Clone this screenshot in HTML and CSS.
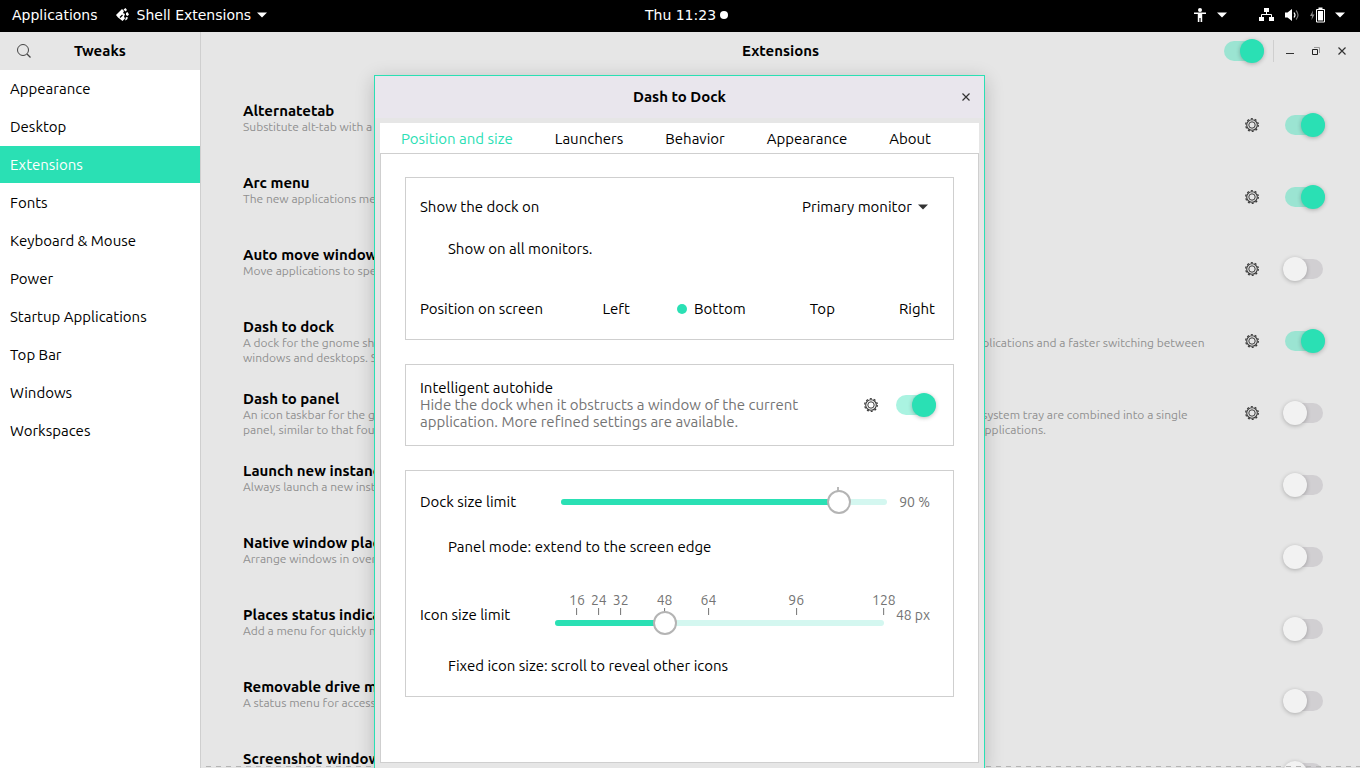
FILE: index.html
```html
<!DOCTYPE html>
<html lang="en">
<head>
<meta charset="utf-8">
<title>Tweaks - Extensions</title>
<link rel="stylesheet" href="styles.css">
</head>
<body>
<svg class="defs" aria-hidden="true">
  <symbol id="gear" viewBox="0 0 14 14">
    <circle cx="7" cy="7" r="6.3" fill="none" stroke="#3c3c3c" stroke-width="1.3" stroke-dasharray="2 1.96"/>
    <circle cx="7" cy="7" r="5.3" fill="none" stroke="#3c3c3c" stroke-width="1.1"/>
    <circle cx="7" cy="7" r="3.2" fill="none" stroke="#3c3c3c" stroke-width="1"/>
  </symbol>
  <symbol id="caret" viewBox="0 0 10 6"><path d="M0 .5h10L5 5.500z" fill="currentColor"/></symbol>
  <symbol id="cross" viewBox="0 0 8 8"><path d="M.5.5l7 7M7.500.5l-7 7" stroke="#333" stroke-width="1.200" fill="none"/></symbol>
</svg>

<header class="topbar">
  <div class="topbar-left">
    <button class="bar-button">Applications</button>
    <button class="bar-button app-menu">
      <svg width="13" height="14" viewBox="0 0 13 14"><path d="M6 1L8 3 7 5 9 6 8 8.500 9 10.500 6.500 13 4 11 2 9.500 0 7 2 5 3.500 3.500z" fill="#fff"/><path d="M7.500 1.500l2-1.500 1.500 2-1.500 1.500z M10 5l1.500-1L13 6.500 11.500 8 10 7z M10 9l2 .5-1 2-2 1z" fill="#fff"/><path d="M4 9.500L6.500 7" stroke="#000" stroke-width="1.200" fill="none"/></svg>
      <span>Shell Extensions</span>
      <svg class="caret" width="10" height="6"><use href="#caret"/></svg>
    </button>
  </div>
  <button class="bar-button clock">Thu 11:23<span class="dot"></span></button>
  <div class="topbar-right">
    <button class="bar-button access" aria-label="Accessibility">
      <svg width="12" height="14" viewBox="0 0 12 14" fill="#fff"><circle cx="6" cy="2" r="2"/><path d="M0 4.500h12v1.500H8.200V14H6.600V10H5.400v4H3.800V6H0z"/></svg>
      <svg class="caret" width="10" height="6"><use href="#caret"/></svg>
    </button>
    <button class="bar-button system" aria-label="System menu">
      <svg width="15" height="14" viewBox="0 0 15 14"><path d="M5 0h5v4H5zM0 9h5v4H0zM10 9h5v4h-5z" fill="#fff"/><path d="M7.500 4v3M2.500 9V6.500h10V9" stroke="#fff" fill="none"/></svg>
      <svg width="14" height="14" viewBox="0 0 14 14"><path d="M0 4.500h2.500L7 1v12L2.500 9.500H0z" fill="#fff"/><path d="M9 4.500q2 2.500 0 5" stroke="#fff" stroke-width="1.200" fill="none"/><path d="M11 2.500q4 4.500 0 9" stroke="#777" stroke-width="1.200" fill="none"/></svg>
      <svg width="15" height="16" viewBox="0 0 15 16"><path d="M3 3.500L0 9h2l-.5 4L4.500 7.500h-2z" fill="#888"/><path d="M6.500 2.500h8v12.500h-8z" fill="none" stroke="#fff"/><path d="M8.500.5h4v1.500h-4zM8 4h5v9.500H8z" fill="#fff"/></svg>
      <svg class="caret" width="10" height="6"><use href="#caret"/></svg>
    </button>
  </div>
</header>

<div class="window">
  <aside class="sidebar">
    <div class="side-header">
      <button class="icon-button" aria-label="Search"><svg width="14" height="14" viewBox="0 0 14 14"><circle cx="6" cy="6" r="5.500" fill="none" stroke="#444"/><path d="M10 10l3.500 3.500" stroke="#444" stroke-width="1.300"/></svg></button>
      <h1 class="title">Tweaks</h1>
    </div>
    <nav class="side-nav">
      <a href="#">Appearance</a>
      <a href="#">Desktop</a>
      <a href="#" class="selected" aria-current="page">Extensions</a>
      <a href="#">Fonts</a>
      <a href="#">Keyboard &amp; Mouse</a>
      <a href="#">Power</a>
      <a href="#">Startup Applications</a>
      <a href="#">Top Bar</a>
      <a href="#">Windows</a>
      <a href="#">Workspaces</a>
    </nav>
  </aside>

  <main class="content">
    <div class="content-header">
      <span></span>
      <h2 class="title">Extensions</h2>
      <div class="controls">
        <input type="checkbox" class="switch" checked aria-label="Enable extensions">
        <span class="divider"></span>
        <button class="win-button" aria-label="Minimize"><svg width="8" height="8"><path d="M0 6.500h8" stroke="#333" stroke-width="1"/></svg></button>
        <button class="win-button" aria-label="Restore"><svg width="8" height="8" viewBox="0 0 8 8"><path d="M2 .5h5.500V6" stroke="#999" fill="none"/><path d="M.5 2.500h5v5h-5z" stroke="#222" fill="none"/></svg></button>
        <button class="win-button" aria-label="Close"><svg width="8" height="8"><use href="#cross"/></svg></button>
      </div>
    </div>

    <div class="ext-list">
      <div class="ext"><label class="ext-text" for="e1"><b>Alternatetab</b><span>Substitute alt-tab with a window based switcher that does not group by application.</span></label><button class="icon-button" aria-label="Settings"><svg width="14" height="14"><use href="#gear"/></svg></button><input type="checkbox" class="switch" id="e1" checked></div>
      <div class="ext"><label class="ext-text" for="e2"><b>Arc menu</b><span>The new applications menu for Gnome 3.</span></label><button class="icon-button" aria-label="Settings"><svg width="14" height="14"><use href="#gear"/></svg></button><input type="checkbox" class="switch" id="e2" checked></div>
      <div class="ext"><label class="ext-text" for="e3"><b>Auto move windows</b><span>Move applications to specific workspaces when they create windows.</span></label><button class="icon-button" aria-label="Settings"><svg width="14" height="14"><use href="#gear"/></svg></button><input type="checkbox" class="switch" id="e3"></div>
      <div class="ext"><label class="ext-text" for="e4"><b>Dash to dock</b><span>A dock for the gnome shell. This extension moves the dash out of the overview transforming it in a dock for an even easier launching of applications and a faster switching between windows and desktops. Side and bottom placement options are available.</span></label><button class="icon-button" aria-label="Settings"><svg width="14" height="14"><use href="#gear"/></svg></button><input type="checkbox" class="switch" id="e4" checked></div>
      <div class="ext"><label class="ext-text" for="e5"><b>Dash to panel</b><span>An icon taskbar for the gnome shell. This extension moves the dash into the gnome main panel so that both the application launchers and system tray are combined into a single panel, similar to that found in KDE Plasma and Windows 7+. A separate dock is no longer needed for easy access to running and favorited applications.</span></label><button class="icon-button" aria-label="Settings"><svg width="14" height="14"><use href="#gear"/></svg></button><input type="checkbox" class="switch" id="e5"></div>
      <div class="ext"><label class="ext-text" for="e6"><b>Launch new instance</b><span>Always launch a new instance when clicking in the dash or the application view.</span></label><input type="checkbox" class="switch" id="e6"></div>
      <div class="ext"><label class="ext-text" for="e7"><b>Native window placement</b><span>Arrange windows in overview in a more compact way.</span></label><input type="checkbox" class="switch" id="e7"></div>
      <div class="ext"><label class="ext-text" for="e8"><b>Places status indicator</b><span>Add a menu for quickly navigating places in the system.</span></label><input type="checkbox" class="switch" id="e8"></div>
      <div class="ext"><label class="ext-text" for="e9"><b>Removable drive menu</b><span>A status menu for accessing and unmounting removable devices.</span></label><input type="checkbox" class="switch" id="e9"></div>
      <div class="ext"><label class="ext-text" for="e10"><b>Screenshot window sizer</b><span>Resize windows for screenshots.</span></label><input type="checkbox" class="switch" id="e10"></div>
    </div>
    <div class="undershoot"></div>
  </main>
</div>

<section class="dialog" role="dialog" aria-labelledby="dialog-title">
  <div class="dialog-header">
    <span></span>
    <h2 class="title" id="dialog-title">Dash to Dock</h2>
    <button class="win-button" aria-label="Close"><svg width="8" height="8"><use href="#cross"/></svg></button>
  </div>
  <div class="notebook">
    <div class="tabs" role="tablist">
      <button role="tab" class="tab active" aria-selected="true">Position and size</button>
      <button role="tab" class="tab">Launchers</button>
      <button role="tab" class="tab">Behavior</button>
      <button role="tab" class="tab">Appearance</button>
      <button role="tab" class="tab">About</button>
    </div>
    <div class="page">
      <div class="frame placement">
        <div class="row monitor">
          <label for="monitor">Show the dock on</label>
          <div class="combo"><select id="monitor"><option>Primary monitor</option></select><svg class="caret" width="10" height="6"><use href="#caret"/></svg></div>
        </div>
        <label class="check"><input type="checkbox"><span>Show on all monitors.</span></label>
        <div class="row position" role="radiogroup" aria-label="Position on screen">
          <span>Position on screen</span>
          <div class="radios">
            <label><input type="radio" name="pos"><span>Left</span></label>
            <label><input type="radio" name="pos" checked><span>Bottom</span></label>
            <label><input type="radio" name="pos"><span>Top</span></label>
            <label><input type="radio" name="pos"><span>Right</span></label>
          </div>
        </div>
      </div>

      <div class="frame autohide">
        <label class="autohide-text" for="autohide">Intelligent autohide<span class="dim">Hide the dock when it obstructs a window of the current application. More refined settings are available.</span></label>
        <button class="icon-button" aria-label="Autohide settings"><svg width="14" height="14"><use href="#gear"/></svg></button>
        <input type="checkbox" class="switch" id="autohide" checked>
      </div>

      <div class="frame sizes">
        <div class="row dock-size">
          <label for="dock">Dock size limit</label>
          <div class="scale">
            <div class="marks"><span class="mark" style="left:85%"></span></div>
            <div class="trough"><div class="fill" style="width:85%"></div><input type="range" id="dock" min="33" max="100" value="90"></div>
          </div>
          <output class="dim" for="dock">90 %</output>
        </div>
        <label class="check"><input type="checkbox"><span>Panel mode: extend to the screen edge</span></label>
        <div class="row icon-size">
          <label for="icon">Icon size limit</label>
          <div class="scale">
            <div class="marks dim">
              <span class="mark" style="left:6.67%">16</span><span class="mark" style="left:13.33%">24</span><span class="mark" style="left:20%">32</span><span class="mark" style="left:33.33%">48</span><span class="mark" style="left:46.67%">64</span><span class="mark" style="left:73.33%">96</span><span class="mark" style="left:100%">128</span>
            </div>
            <div class="trough"><div class="fill" style="width:33.33%"></div><input type="range" id="icon" min="8" max="128" value="48"></div>
          </div>
          <output class="dim" for="icon">48 px</output>
        </div>
        <label class="check"><input type="checkbox"><span>Fixed icon size: scroll to reveal other icons</span></label>
      </div>
    </div>
  </div>
</section>
</body>
</html>
```
FILE: styles.css
```css
* { box-sizing: border-box; }

:root {
  --accent: #2ae0b4;
  --line: #cfcfcf;
  --bg: #e6e6e6;
}

body {
  margin: 0;
  height: 100vh;
  display: flex;
  flex-direction: column;
  overflow: hidden;
  position: relative;
  font: 15px/17px Ubuntu, "Noto Sans", sans-serif;
  color: #000;
  background: var(--bg);
}

button, select, input { margin: 0; font: inherit; color: inherit; }
button { border: 0; padding: 0; background: none; }
svg { display: block; flex: none; }
.defs { position: absolute; width: 0; height: 0; }
.title { margin: 0; font-size: 15px; line-height: 18px; font-weight: 700; text-align: center; white-space: nowrap; }
.dim { color: #747474; }

/* Top bar */
.topbar {
  flex: none;
  height: 32px;
  padding: 0 15px 2px 12px;
  display: grid;
  grid-template-columns: 1fr auto 1fr;
  align-items: center;
  background: #000;
  color: #fff;
  font-family: "DejaVu Sans", sans-serif;
  font-size: 14px;
}
.topbar-left, .topbar-right, .bar-button { display: flex; align-items: center; }
.topbar-left { gap: 18px; }
.topbar-right { justify-content: flex-end; gap: 32px; }
.app-menu { gap: 8px; }
.app-menu .caret { margin-left: -2px; }
.clock { gap: 4px; padding-left: 16px; }
.dot { width: 8px; height: 8px; border-radius: 50%; background: #fff; }
.access { gap: 11px; }
.system { gap: 11px; }
.system .caret { margin-left: -1px; }

/* Main window */
.window { flex: 1; min-height: 0; display: flex; }
.sidebar { flex: 0 0 201px; border-right: 1px solid var(--line); background: #fff; }
.side-header {
  height: 38px;
  display: grid;
  grid-template-columns: 47px 1fr 47px;
  align-items: center;
  background: var(--bg);
}
.side-header .icon-button { justify-self: center; }
.side-nav { display: flex; flex-direction: column; gap: 1px; }
.side-nav a { height: 37px; padding: 0 10px; line-height: 38px; color: #000; text-decoration: none; }
.side-nav .selected { background: var(--accent); color: #fff; }

.content { flex: 1; min-width: 0; display: flex; flex-direction: column; position: relative; overflow: hidden; }
.content-header {
  flex: none;
  height: 38px;
  display: grid;
  grid-template-columns: 1fr auto 1fr;
  align-items: center;
}
.controls { display: flex; align-items: center; justify-content: flex-end; padding-right: 5px; }
.divider { width: 1px; height: 22px; margin: 0 3px 0 9px; background: var(--line); }
.win-button { width: 26px; height: 26px; display: grid; place-items: center; }

.ext-list { padding-top: 19px; }
.ext { height: 72px; padding: 0 35px 0 42px; display: flex; align-items: center; gap: 24px; }
.ext-text { flex: 1; align-self: flex-start; padding: 13px 8px 0 0; }
.ext-text b { display: block; }
.ext-text span { display: block; font-size: 12px; line-height: 15px; color: #909090; }
.undershoot {
  position: absolute;
  left: 0;
  right: 0;
  bottom: 1px;
  height: 1px;
  background: repeating-linear-gradient(90deg, transparent 0 5px, #b4b4b4 5px 10px);
}

/* Switch */
.switch { appearance: none; position: relative; flex: none; width: 42px; height: 24px; }
.switch::before, .switch::after { content: ""; position: absolute; left: 0; }
.switch::before { top: 2px; width: 40px; height: 20px; border-radius: 10px; background: #d1cfd2; }
.switch::after { top: 0; width: 24px; height: 24px; border-radius: 50%; background: #f2f2f2; box-shadow: 0 1px 4px rgba(0, 0, 0, .25); }
.switch:checked::before { left: 2px; background: rgba(42, 224, 180, .4); }
.switch:checked::after { left: 18px; background: var(--accent); }

/* Preferences dialog */
.dialog {
  position: absolute;
  top: 75px;
  bottom: 0;
  left: calc(50% - 306px);
  width: 611px;
  display: flex;
  flex-direction: column;
  border: 1px solid var(--accent);
  border-bottom: 0;
  background: var(--bg);
  box-shadow: 0 4px 18px rgba(0, 0, 0, .2);
}
.dialog-header {
  flex: none;
  height: 42px;
  display: grid;
  grid-template-columns: 1fr auto 1fr;
  align-items: center;
  background: #e9e6ed;
}
.dialog-header .win-button { justify-self: end; margin-right: 5px; }
.notebook { flex: 1; min-height: 0; display: flex; flex-direction: column; margin: 5px; }
.tabs { flex: none; height: 30px; display: flex; background: #fff; }
.tab { padding: 0 21px; white-space: nowrap; }
.tab.active { color: var(--accent); }
.page { flex: 1; padding: 23px 24px; display: flex; flex-direction: column; gap: 24px; border: 1px solid var(--line); background: #fff; }
.frame { border: 1px solid var(--line); }
.row { display: flex; align-items: center; justify-content: space-between; }
.row > label, .row > span, .check > span, .radios span, .combo select { padding: 0 0 2px; }

.placement { padding: 12px 18px 18px 14px; }
.monitor { height: 34px; }
.combo { display: flex; align-items: center; gap: 6px; padding-right: 7px; color: #333; }
.combo select { appearance: none; border: 0; background: none; color: #000; }
.check { display: flex; align-items: center; gap: 12px; height: 24px; }
.check input { appearance: none; width: 16px; height: 16px; }
.monitor + .check { margin: 13px 0 36px; }
.position { height: 24px; }
.radios { display: flex; gap: 47px; }
.radios label { display: flex; align-items: center; gap: 7px; }
.radios input { appearance: none; width: 10px; height: 10px; border-radius: 50%; }
.radios input:checked { background: var(--accent); }

.autohide { display: flex; align-items: center; gap: 16px; padding: 13px 17px 14px 14px; }
.autohide-text { flex: 1; padding: 1px 0; }
.autohide-text .dim { display: block; }

.sizes { padding: 16px 23px 18px 14px; }
.sizes .row { gap: 12px; }
.sizes output, .marks { font-size: 14px; }
.dock-size { height: 30px; }
.dock-size label { flex: 0 0 129px; }
.icon-size label { flex: 0 0 123px; }
.dock-size + .check { margin: 18px 0 33px; }
.icon-size { height: 46px; margin-bottom: 16px; }
.scale { flex: 1; height: 100%; }
.marks { position: relative; height: 12px; line-height: 16px; }
.icon-size .marks { height: 28px; }
.mark { position: absolute; top: 0; transform: translateX(-50%); }
.mark::after { content: ""; display: block; width: 1px; height: 7px; margin: 0 auto; background: #747474; }
.trough { position: relative; height: 6px; border-radius: 3px; background: #d4f7f0; }
.fill { height: 6px; border-radius: 3px; background: var(--accent); }
.trough input { appearance: none; position: absolute; left: -12px; top: -9px; width: calc(100% + 24px); height: 24px; background: none; }
.trough input::-webkit-slider-thumb { appearance: none; width: 24px; height: 24px; border: 2px solid #b4b4b4; border-radius: 50%; background: #fff; }
.trough input::-moz-range-thumb { width: 20px; height: 20px; border: 2px solid #b4b4b4; border-radius: 50%; background: #fff; }
```
